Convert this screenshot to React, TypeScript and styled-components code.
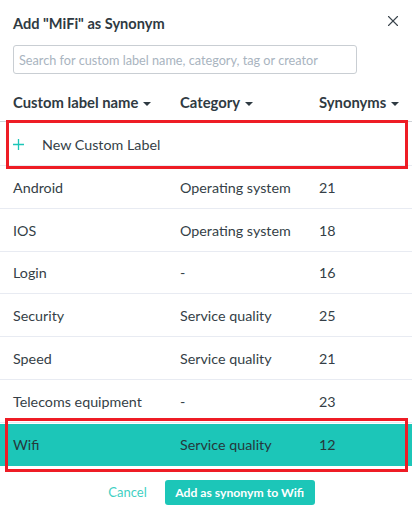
import { createGlobalStyle } from 'styled-components';
import styled from 'styled-components';
import { X } from 'lucide-react';

const GlobalStyle = createGlobalStyle`
  html, body {
    margin: 0;
    padding: 0;
    background: #fff;
    font-family: Lato, "Open Sans", sans-serif;
  }
`;

const Dialog = styled.div`
  width: 412px;
  height: 509px;
  overflow: hidden;
  background: #fff;
  display: flex;
  flex-direction: column;
`;

const Header = styled.div`
  display: flex;
  justify-content: space-between;
  padding: 14px 10px 0 13px;
  height: 31px;
`;

const Title = styled.h1`
  margin: 0;
  font-size: 14.6px;
  line-height: 19px;
  font-weight: 700;
  color: #2f3a42;
`;

const CloseButton = styled.button`
  border: none;
  background: none;
  padding: 0;
  width: 18px;
  height: 18px;
  margin-top: -2px;
  color: #3a444c;
  display: flex;
`;

const SearchInput = styled.input`
  box-sizing: border-box;
  display: block;
  width: 344px;
  height: 29px;
  margin-left: 13px;
  padding: 0 5px;
  border: 1px solid #c9ced3;
  border-radius: 3px;
  font-family: inherit;
  font-size: 12.7px;
  &::placeholder {
    color: #a9b4c0;
    opacity: 1;
  }
`;

const Row = styled.div`
  position: relative;
  display: grid;
  grid-template-columns: 167px 139px 1fr;
  align-items: center;
  box-sizing: border-box;
  height: 42.8px;
  padding: 1px 0 0 13px;
  font-size: 14.3px;
  color: #353f47;
  border-bottom: 1px solid #e8ebf2;
`;

const HeadRow = styled(Row)`
  height: 48px;
  padding-top: 9px;
  font-size: 14.8px;
  font-weight: 700;
  color: #2f3a42;
  border-bottom: 1px solid #cfd3d8;
`;

const SelectedRow = styled(Row)`
  height: 42px;
  margin-top: 1px;
  padding-top: 0;
  background: #1cc6b8;
  color: #25383b;
  border-bottom: none;
`;

const HeadCell = styled.span`
  display: flex;
  align-items: center;
  gap: 5px;
`;

const Caret = styled.i`
  width: 0;
  height: 0;
  margin-top: 3px;
  border-left: 4px solid transparent;
  border-right: 4px solid transparent;
  border-top: 4px solid #2f3a42;
`;

const NewLabelRow = styled(Row)`
  display: flex;
  gap: 18px;
  height: 44px;
`;

const PlusIcon = styled.svg`
  width: 11px;
  height: 11px;
  flex: none;
  stroke: #1cc6b8;
  stroke-width: 1.3;
`;

const RedBox = styled.div<{ $top: number; $bottom: number; $left: number; $right: number }>`
  position: absolute;
  top: ${(p) => p.$top}px;
  bottom: ${(p) => p.$bottom}px;
  left: ${(p) => p.$left}px;
  right: ${(p) => p.$right}px;
  border: 3px solid #ee1c25;
  pointer-events: none;
`;

const Footer = styled.div`
  display: flex;
  justify-content: center;
  align-items: center;
  gap: 18px;
  margin-top: 14px;
  padding-left: 11px;
`;

const CancelButton = styled.button`
  border: none;
  background: none;
  padding: 0;
  font-family: inherit;
  font-size: 13px;
  color: #3fd0c3;
`;

const AddButton = styled.button`
  border: none;
  height: 25px;
  width: 150px;
  padding: 0;
  border-radius: 3px;
  background: #1cc6b8;
  color: #fff;
  font-family: inherit;
  font-size: 12.2px;
  font-weight: 700;
`;

const labels = [
  { name: 'Android', category: 'Operating system', synonyms: 21 },
  { name: 'IOS', category: 'Operating system', synonyms: 18 },
  { name: 'Login', category: '-', synonyms: 16 },
  { name: 'Security', category: 'Service quality', synonyms: 25 },
  { name: 'Speed', category: 'Service quality', synonyms: 21 },
  { name: 'Telecoms equipment', category: '-', synonyms: 23 },
];

const App = () => {
  return (
    <Dialog>
      <GlobalStyle />
      <Header>
        <Title>Add "MiFi" as Synonym</Title>
        <CloseButton aria-label="Close">
          <X size={18} strokeWidth={1.5} />
        </CloseButton>
      </Header>
      <SearchInput placeholder="Search for custom label name, category, tag or creator" />
      <HeadRow>
        <HeadCell>Custom label name <Caret /></HeadCell>
        <HeadCell>Category <Caret /></HeadCell>
        <HeadCell>Synonyms <Caret /></HeadCell>
      </HeadRow>
      <NewLabelRow>
        <PlusIcon viewBox="0 0 11 11">
          <path d="M5.5 0v11M0 5.5h11" />
        </PlusIcon>
        New Custom Label
        <RedBox $top={-2} $bottom={-4} $left={6} $right={4} />
      </NewLabelRow>
      {labels.map((label) => (
        <Row key={label.name}>
          <span>{label.name}</span>
          <span>{label.category}</span>
          <span>{label.synonyms}</span>
        </Row>
      ))}
      <SelectedRow>
        <span>Wifi</span>
        <span>Service quality</span>
        <span>12</span>
        <RedBox $top={-6} $bottom={-6} $left={5} $right={4} />
      </SelectedRow>
      <Footer>
        <CancelButton>Cancel</CancelButton>
        <AddButton>Add as synonym to Wifi</AddButton>
      </Footer>
    </Dialog>
  );
};

export default App;
